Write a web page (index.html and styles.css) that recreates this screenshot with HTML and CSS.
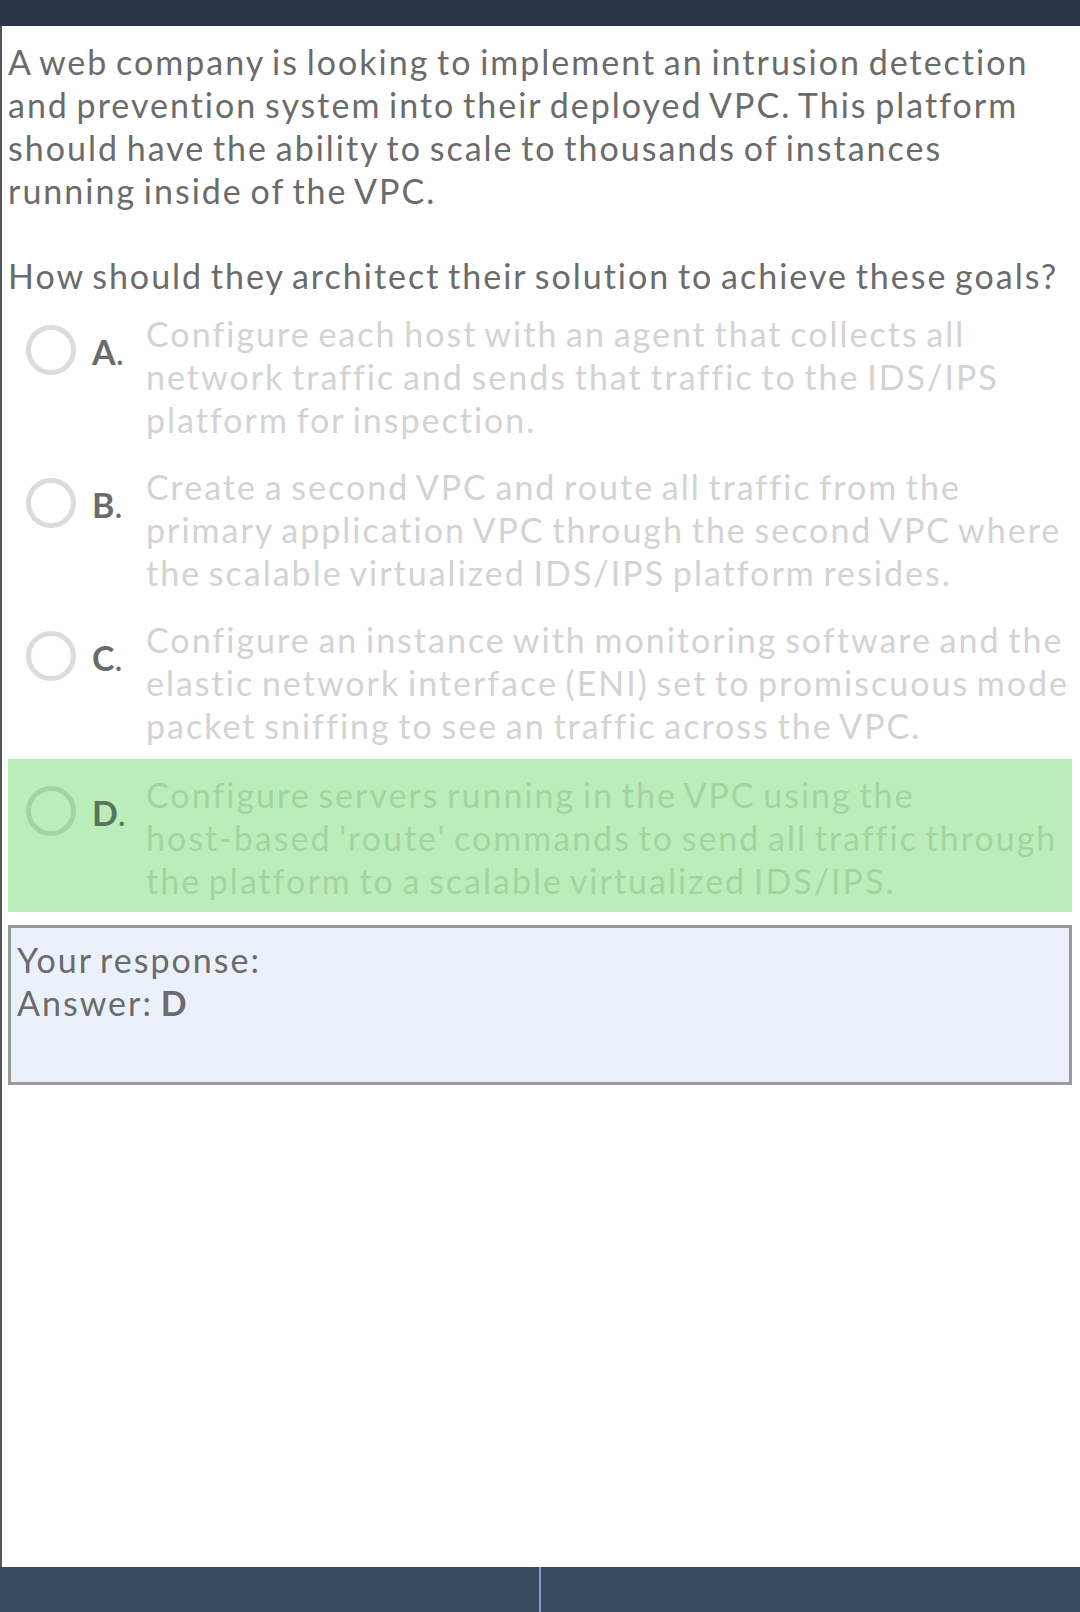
FILE: index.html
```html
<!DOCTYPE html>
<html>
<head>
<meta charset="utf-8">
<link rel="stylesheet" href="styles.css">
</head>
<body>
<div class="topbar"></div>
<main class="main">
  <p class="question">A web company is looking to implement an intrusion detection and prevention system into their deployed VPC. This platform should have the ability to scale to thousands of instances running inside of the VPC.</p>
  <p class="prompt">How should they architect their solution to achieve these goals?</p>
  <div class="options">
    <div class="option">
      <span class="radio"></span>
      <span class="label"><b>A</b>.</span>
      <span class="text">Configure each host with an agent that collects all network traffic and sends that traffic to the IDS/IPS platform for inspection.</span>
    </div>
    <div class="option">
      <span class="radio"></span>
      <span class="label"><b>B</b>.</span>
      <span class="text">Create a second VPC and route all traffic from the primary application VPC through the second VPC where the scalable virtualized IDS/IPS platform resides.</span>
    </div>
    <div class="option">
      <span class="radio"></span>
      <span class="label"><b>C</b>.</span>
      <span class="text">Configure an instance with monitoring software and the elastic network interface (ENI) set to promiscuous mode packet sniffing to see an traffic across the VPC.</span>
    </div>
    <div class="option correct">
      <span class="radio"></span>
      <span class="label"><b>D</b>.</span>
      <span class="text">Configure servers running in the VPC using the <span class="nowrap">host-based</span> 'route' commands to send all traffic through the platform to a scalable virtualized IDS/IPS.</span>
    </div>
  </div>
  <div class="response">
    <div>Your response:</div>
    <div>Answer: <b>D</b></div>
  </div>
</main>
<footer class="bottombar">
  <div class="half"></div>
  <div class="half"></div>
</footer>
</body>
</html>
```

FILE: styles.css
```css
* { box-sizing: border-box; }
html, body { margin: 0; padding: 0; }
body {
  width: 1080px;
  height: 1612px;
  display: flex;
  flex-direction: column;
  font-family: Lato, "Open Sans", sans-serif;
  font-size: 34px;
  line-height: 43px;
  letter-spacing: 2px;
  word-spacing: -3px;
  font-variant-ligatures: none;
  color: #6b6b6b;
  background: #fff;
  overflow: hidden;
}
.topbar {
  height: 26px;
  background: #283646;
  flex: none;
}
.main {
  flex: 1;
  border-left: 2px solid #555;
  padding: 14px 8px 0 6px;
}
.question { margin: 0; }
.prompt { margin: 42px 0 0; }
.options { margin-top: 1px; }
.option {
  display: flex;
  align-items: flex-start;
  padding: 14px 0 10px;
}
.radio {
  flex: none;
  width: 50px;
  height: 50px;
  border: 5px solid #dcdcdc;
  border-radius: 50%;
  margin: 13px 0 0 18px;
}
.label {
  flex: none;
  width: 54px;
  margin: 18px 0 0 16px;
  color: #6b6b6b;
  letter-spacing: 0;
}
.label b { font-weight: 700; }
.text {
  flex: 1;
  color: #d3d3d3;
}
.nowrap { white-space: nowrap; }
.option.correct {
  background: #bbedba;
  margin-top: 2px;
}
.option.correct .radio { border-color: #a3d3a2; }
.option.correct .label { color: #587559; }
.option.correct .text { color: #a2d4a1; }
.response {
  margin-top: 13px;
  border: 3px solid #999;
  background: #eaf1fa;
  padding: 10px 6px 0;
  height: 160px;
}
.response b { font-weight: 700; }
.bottombar {
  flex: none;
  height: 45px;
  background: #364b5f;
  display: flex;
}
.half { flex: 1; }
.half + .half { border-left: 2px solid #8c9ad0; }
```
